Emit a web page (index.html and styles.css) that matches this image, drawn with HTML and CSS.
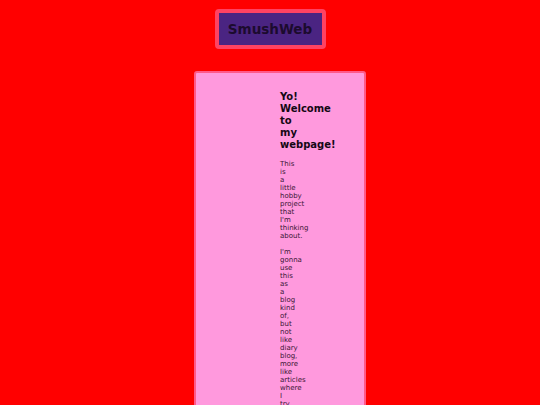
FILE: index.html
```html
<!DOCTYPE html>
<html>
<head>
<meta charset="utf-8">
<link rel="stylesheet" href="styles.css">
</head>
<body>
<header class="top">
  <div class="brand">SmushWeb</div>
</header>
<main class="card">
  <div class="content">
    <h1 class="title">Yo! Welcome to my webpage!</h1>
    <p class="para">This is a little hobby project that I'm thinking about.</p>
    <p class="para">I'm gonna use this as a blog kind of, but not like diary blog, more like articles where I try to write about things I find interesting and stuff.</p>
  </div>
</main>
</body>
</html>
```
FILE: styles.css
```css
html, body {
  margin: 0;
  padding: 0;
  background: #ff0000;
  font-family: Verdana, "DejaVu Sans", sans-serif;
}
.top {
  display: flex;
  justify-content: center;
  padding-top: 9px;
}
.brand {
  box-sizing: border-box;
  width: 111px;
  height: 40px;
  border: 4px solid #ff4262;
  border-radius: 4px;
  background: #4a2482;
  color: #1c0b2e;
  font-weight: bold;
  font-size: 13.5px;
  display: flex;
  align-items: center;
  justify-content: center;
}
.card {
  box-sizing: border-box;
  margin: 22px 0 0 194px;
  width: 172px;
  min-height: 600px;
  border: 2px solid #ff5a8a;
  border-radius: 3px;
  background: #ff99dd;
  padding: 18px 0 0 84px;
}
.content {
  width: 0;
  color: #3a1634;
}
.title {
  margin: 0 0 9px;
  font-size: 10px;
  line-height: 12px;
  font-weight: bold;
  color: #140814;
}
.para {
  margin: 0 0 8px;
  font-size: 7px;
  line-height: 8px;
}
```
